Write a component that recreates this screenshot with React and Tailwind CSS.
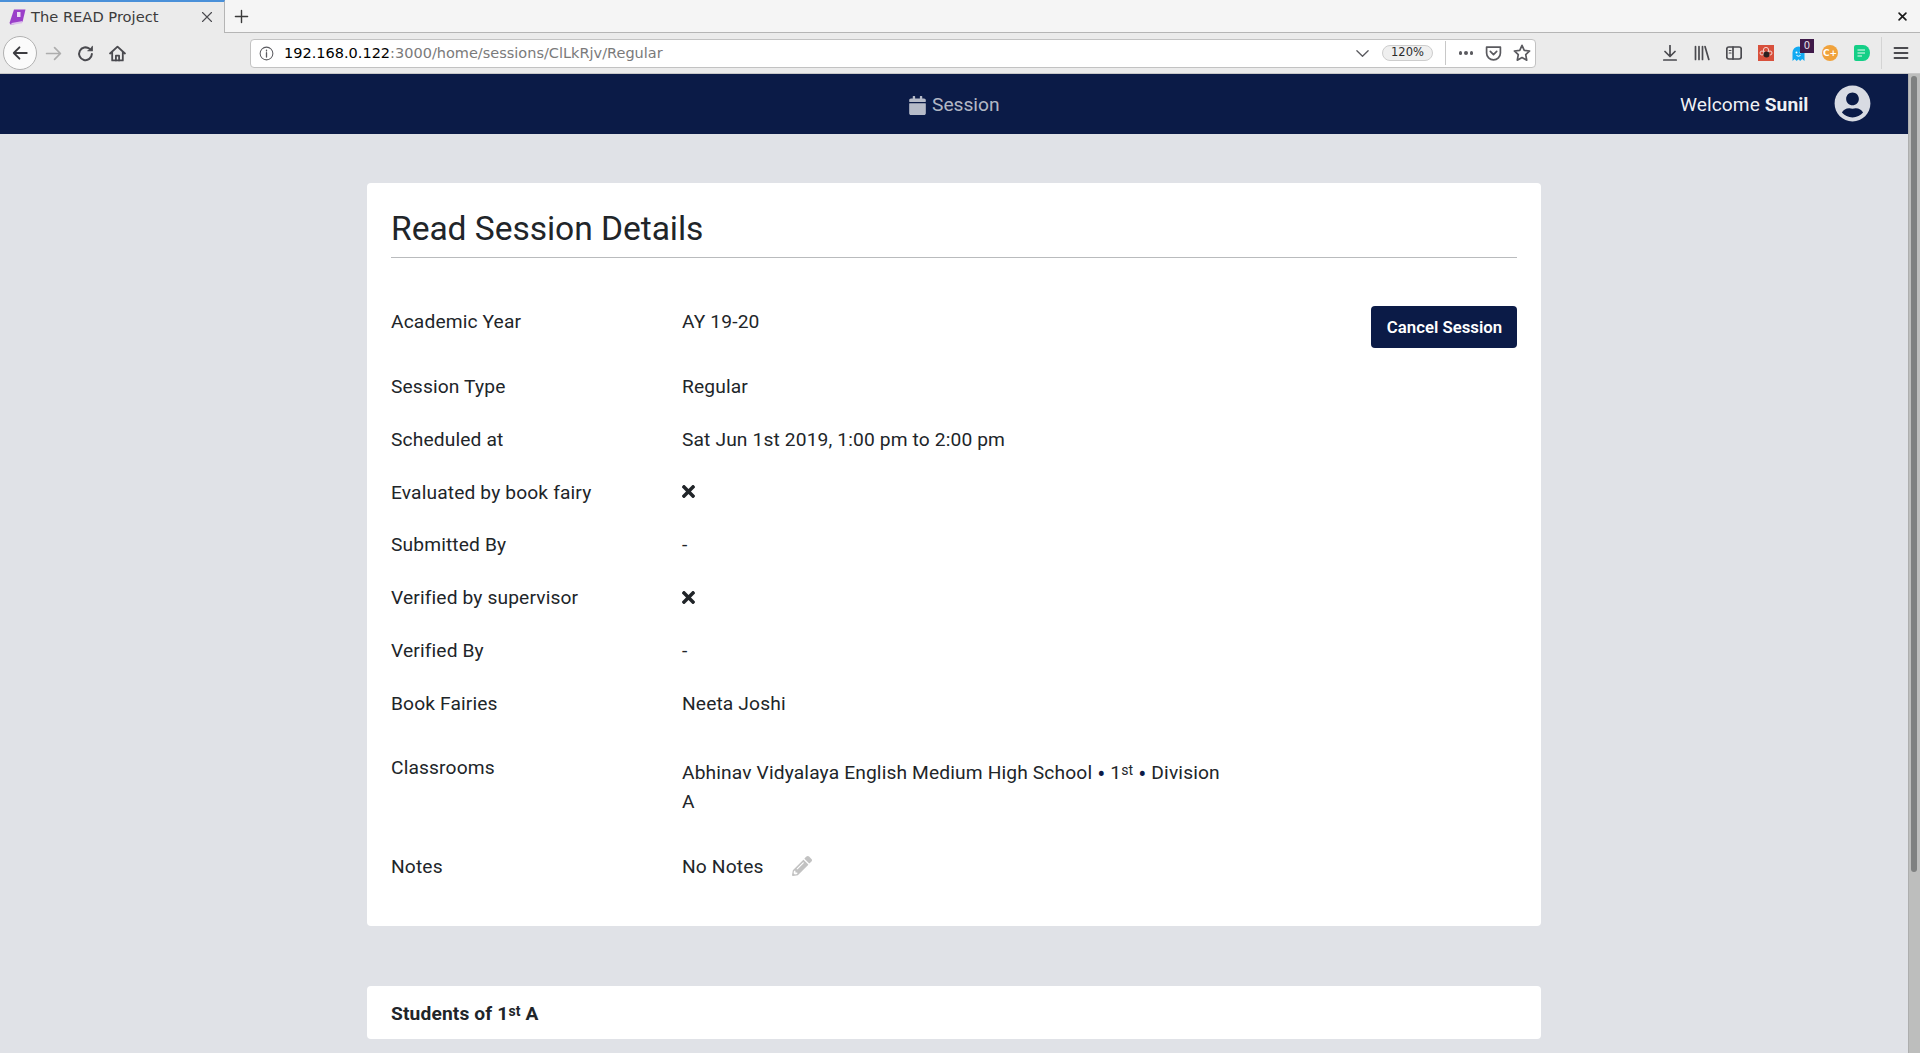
import React from "react";
import { FaCalendar, FaTimes, FaPencilAlt, FaUserCircle } from "react-icons/fa";

const Slot = ({ children, className = "" }) => (
  <div className={`relative w-8 h-8 flex items-center justify-center shrink-0 ${className}`}>{children}</div>
);

const Stroke = ({ children, size = 16, color = "#4a4a4f", width = 1.6 }) => (
  <svg width={size} height={size} viewBox="0 0 16 16" fill="none" stroke={color} strokeWidth={width} strokeLinecap="round" strokeLinejoin="round">
    {children}
  </svg>
);

const Row = ({ label, children, className = "" }) => (
  <div className={`flex mb-[22.2px] leading-[30.6px] ${className}`}>
    <div className="w-[291px] shrink-0">{label}</div>
    <div>{children}</div>
  </div>
);

const Cross = () => <FaTimes className="text-[#212529] w-[15px] h-[19px] mt-[4.5px] -ml-[1px]" />;
const Dot = () => <span className="relative top-[3px] text-[#0b1b47] text-[24px] leading-[0]">•</span>;
const St = () => <sup className="text-[14px] leading-[0] -top-[4.5px]">st</sup>;

export default function App() {
  return (
    <div className="h-screen overflow-hidden flex flex-col bg-[#e0e2e7] font-['Roboto',sans-serif] text-[#212529]">
      {/* tab strip */}
      <div className="h-[33px] shrink-0 flex bg-[#f5f5f5] border-b border-[#b5b5b5] font-['DejaVu_Sans',sans-serif]">
        <div className="w-[225px] h-[33px] bg-[#ebebeb] border-t-2 border-r border-t-[#4a90d9] border-r-[#b5b5b5] flex items-center pl-[9px] pr-[11px] pb-[1px] text-[14.67px] text-[#3c3c3c]">
          <svg width="17" height="17" viewBox="0 0 17 17" className="shrink-0">
            <path d="M5 0.5 L16.5 0.5 L13.5 13 L2 16 L0.5 14 Z" fill="#9a3fc9" />
            <path d="M2 16 L2.6 14 L13.6 12 L13 14.2 Z" fill="#dcc0ec" />
            <rect x="8" y="3" width="3.5" height="5" fill="#eadcf3" />
          </svg>
          <span className="ml-[5px] flex-1 whitespace-nowrap">The READ Project</span>
          <Stroke size={12} color="#4a4a4f" width={1.5}><path d="M2 2 L14 14 M14 2 L2 14" /></Stroke>
        </div>
        <div className="w-8 flex items-center justify-center">
          <Stroke size={15} color="#3a3a3a" width={1.5}><path d="M8 1.5 V14.5 M1.5 8 H14.5" /></Stroke>
        </div>
        <div className="flex-1" />
        <div className="w-9 flex items-center justify-center">
          <Stroke size={11} color="#1a1a1a" width={2.4}><path d="M3 3 L13 13 M13 3 L3 13" /></Stroke>
        </div>
      </div>

      {/* toolbar */}
      <div className="h-[41px] shrink-0 flex items-center bg-[#ebebeb] border-b border-[#c8c8c8] pl-[3px] font-['DejaVu_Sans',sans-serif]">
        <div className="w-[34px] h-[34px] rounded-full bg-[#fbfbfb] border border-[#b1b1b1] flex items-center justify-center shrink-0">
          <Stroke size={18} color="#3c3c40" width={1.7}><path d="M14 8 H2.5 M7.5 3 L2.5 8 L7.5 13" /></Stroke>
        </div>
        <Slot><Stroke size={17} color="#adadad"><path d="M1.5 8 H14.5 M9 2.5 L14.5 8 L9 13.5" /></Stroke></Slot>
        <Slot>
          <Stroke size={17} color="#4a4a4f" width={1.9}>
            <path d="M14 8.5 A6 6 0 1 1 11.8 3.6" />
            <path d="M14.4 1.2 V5.4 H10.2" fill="#4a4a4f" strokeWidth={1} />
          </Stroke>
        </Slot>
        <Slot>
          <Stroke size={17} color="#4a4a4f" width={1.7}>
            <path d="M1 8 L8 1.5 L15 8 M3 6.5 V14.5 H13 V6.5" />
            <path d="M6.5 14.5 V10 H9.5 V14.5" />
          </Stroke>
        </Slot>
        {/* url bar */}
        <div className="ml-[117px] w-[1286px] h-[29px] bg-white border border-[#c2c2c2] rounded-[4px] flex items-center shrink-0 pr-[4px]">
          <div className="ml-[8px] w-[15px] flex justify-center">
            <Stroke size={15} color="#5a5a5f" width={1.1}>
              <circle cx="8" cy="8" r="6.8" />
              <path d="M8 7.2 V11.8 M8 4.4 V5.2" strokeWidth={1.4} />
            </Stroke>
          </div>
          <div className="ml-[10px] pt-[1px] text-[14.5px] whitespace-nowrap flex-1">
            <span className="text-black">192.168.0.122</span>
            <span className="text-[#7a7a7a]">:3000/home/sessions/ClLkRjv/Regular</span>
          </div>
          <Stroke size={15} color="#5a5a5f" width={1.4}><path d="M2 5 L8 11 L14 5" /></Stroke>
          <div className="ml-[12px] w-[51px] h-4 rounded-full bg-[#efefef] border border-[#cdcdcd] text-[11.5px] flex items-center justify-center text-[#2b2b2b]">120%</div>
          <div className="ml-3 w-px h-[24px] bg-[#c8c8c8]" />
          <div className="ml-[11px] w-[18px] flex justify-center gap-[2px]">
            <span className="w-[3.5px] h-[3.5px] rounded-full bg-[#5a5a5f]" />
            <span className="w-[3.5px] h-[3.5px] rounded-full bg-[#5a5a5f]" />
            <span className="w-[3.5px] h-[3.5px] rounded-full bg-[#5a5a5f]" />
          </div>
          <div className="ml-[10px]">
            <Stroke size={17} color="#5a5a5f" width={1.6}>
              <path d="M1.5 2 H14.5 V7.5 A6.5 6.5 0 0 1 1.5 7.5 Z" />
              <path d="M5 6 L8 9 L11 6" />
            </Stroke>
          </div>
          <div className="ml-[11px]">
            <Stroke size={18} color="#5a5a5f" width={1.5}>
              <path d="M8 1.2 L10 5.6 L14.8 6.2 L11.3 9.5 L12.2 14.4 L8 12 L3.8 14.4 L4.7 9.5 L1.2 6.2 L6 5.6 Z" />
            </Stroke>
          </div>
        </div>
        {/* right icons */}
        <div className="ml-[118px] flex items-center">
          <Slot>
            <Stroke color="#4a4a4f" width={1.7}><path d="M8 0.5 V11 M3 6.5 L8 11.5 L13 6.5 M1.8 15 H14.2" /></Stroke>
          </Slot>
          <Slot>
            <Stroke color="#4a4a4f" width={1.7}><path d="M1.5 1.5 V14.5 M5 1.5 V14.5 M8.5 1.5 V14.5 M11 1.5 L14.8 14.5" /></Stroke>
          </Slot>
          <Slot>
            <Stroke color="#4a4a4f" width={1.7}>
              <rect x="0.8" y="2" width="14.4" height="12" rx="2" />
              <path d="M7 2 V14" />
              <path d="M3.2 5.5 H5 M3.2 8 H5" strokeWidth={1.2} />
            </Stroke>
          </Slot>
          <Slot>
            <svg width="16" height="16" viewBox="0 0 16 16">
              <rect width="16" height="16" fill="#d8503c" />
              <circle cx="8" cy="5" r="2.6" fill="none" stroke="#f5d5d0" strokeWidth="1" />
              <circle cx="4" cy="8" r="2" fill="none" stroke="#f5d5d0" strokeWidth="1" />
              <circle cx="12" cy="8" r="2" fill="none" stroke="#f5d5d0" strokeWidth="1" />
              <circle cx="8.5" cy="9.5" r="3" fill="#2b2020" />
            </svg>
          </Slot>
          <Slot>
            <svg width="13" height="15" viewBox="0 0 13 15">
              <path d="M0.5 15 V6.5 A6 6 0 0 1 12.5 6.5 V15 L10.2 13 L8.2 15 L6.5 13.2 L4.7 15 L2.7 13 Z" fill="#12aaf2" />
              <circle cx="4.5" cy="6.5" r="1" fill="#fff" />
              <circle cx="8.5" cy="6.5" r="1" fill="#fff" />
              <path d="M4.5 9.5 Q6.5 11 8.5 9.5" stroke="#fff" fill="none" />
            </svg>
            <span className="absolute left-[18px] top-[2px] w-[14px] h-[14px] bg-[#3f1a4a] text-[#e8e0ea] text-[10px] leading-[14px] text-center">0</span>
          </Slot>
          <Slot>
            <div className="w-4 h-4 rounded-full bg-[#f0a23c] text-white text-[9px] font-bold flex items-center justify-center leading-none">C+</div>
          </Slot>
          <Slot>
            <svg width="16" height="16" viewBox="0 0 16 16">
              <path d="M2 0 H9 A7 8 0 0 1 9 16 H2 A2 2 0 0 1 0 14 V2 A2 2 0 0 1 2 0 Z" fill="#14cf87" />
              <path d="M3.5 5 H11 M3.5 8 H11 M3.5 11 H8" stroke="#e8fbf3" strokeWidth="1.2" />
            </svg>
          </Slot>
        </div>
        <div className="ml-[3px] w-px h-[32px] bg-[#d4d4d4]" />
        <div className="ml-[11px]">
          <Stroke color="#4a4a4f" width={1.8}><path d="M1.5 3 H14.5 M1.5 8 H14.5 M1.5 13 H14.5" /></Stroke>
        </div>
      </div>

      {/* page */}
      <div className="flex-1 min-h-0 flex">
        <div className="flex-1 min-w-0 overflow-hidden">
          <nav className="h-[60px] bg-[#0b1b47] flex items-center text-[19.2px]">
            <div className="w-[909px] shrink-0" />
            <div className="flex items-center text-white/70 w-[650px] pt-[3px]">
              <FaCalendar className="w-[17px] h-[19px] mr-[6px]" />
              <span>Session</span>
            </div>
            <div className="text-white/95 ml-[121px] pt-[3px] tracking-[0.05px]">
              Welcome <span className="font-bold">Sunil</span>
            </div>
            <FaUserCircle className="ml-[26px] -mt-[2px] w-[37px] h-[37px] text-[#d8dbe3]" />
          </nav>

          <main className="w-[1174px] mx-auto pt-[49px] text-[19.2px] tracking-[0.14px]">
            <section className="bg-white rounded-[4px] px-6 h-[743px]">
              <h3 className="pt-[26px] h-[75px] text-[33.6px] leading-[40px] tracking-[-0.05px] border-b border-[#b9bbbd]">Read Session Details</h3>
              <div className="pt-[48px]">
                <div className="flex mb-6 leading-[31.8px]">
                  <div className="w-[291px] shrink-0">Academic Year</div>
                  <div className="flex-1">AY 19-20</div>
                  <button className="h-[42px] w-[146px] pl-[1px] pt-[1px] rounded-[4px] bg-[#0b1b47] text-white text-[16.8px] font-semibold tracking-normal">Cancel Session</button>
                </div>
                <Row label="Session Type">Regular</Row>
                <Row label="Scheduled at">Sat Jun 1st 2019, 1:00 pm to 2:00 pm</Row>
                <Row label="Evaluated by book fairy"><Cross /></Row>
                <Row label="Submitted By">-</Row>
                <Row label="Verified by supervisor"><Cross /></Row>
                <Row label="Verified By">-</Row>
                <Row label="Book Fairies" className="!mb-[34.2px]">Neeta Joshi</Row>
                <div className="flex h-[99px]">
                  <div className="w-[291px] shrink-0 leading-[30.6px]">Classrooms</div>
                  <div className="w-[545px] pt-[6px] leading-[28.8px]">
                    Abhinav Vidyalaya English Medium High School <Dot /> 1<St /> <Dot /> Division A
                  </div>
                </div>
                <div className="flex leading-[30.6px]">
                  <div className="w-[291px] shrink-0">Notes</div>
                  <div>No Notes</div>
                  <FaPencilAlt className="ml-[28px] mt-[4px] w-[20px] h-[20px] text-[#c2c2c2]" />
                </div>
              </div>
            </section>
            <section className="mt-[60px] bg-white rounded-[4px] px-6 pt-[14px] pb-[10px] leading-[28.8px] font-bold">
              Students of 1<St /> A
            </section>
          </main>
        </div>
        {/* scrollbar */}
        <div className="w-3 shrink-0 bg-[#bdbebd] border-l border-[#adaeae] pt-[2px] pl-[2px]">
          <div className="w-[6px] h-[796px] rounded-full bg-[#7f8181]" />
        </div>
      </div>
    </div>
  );
}
